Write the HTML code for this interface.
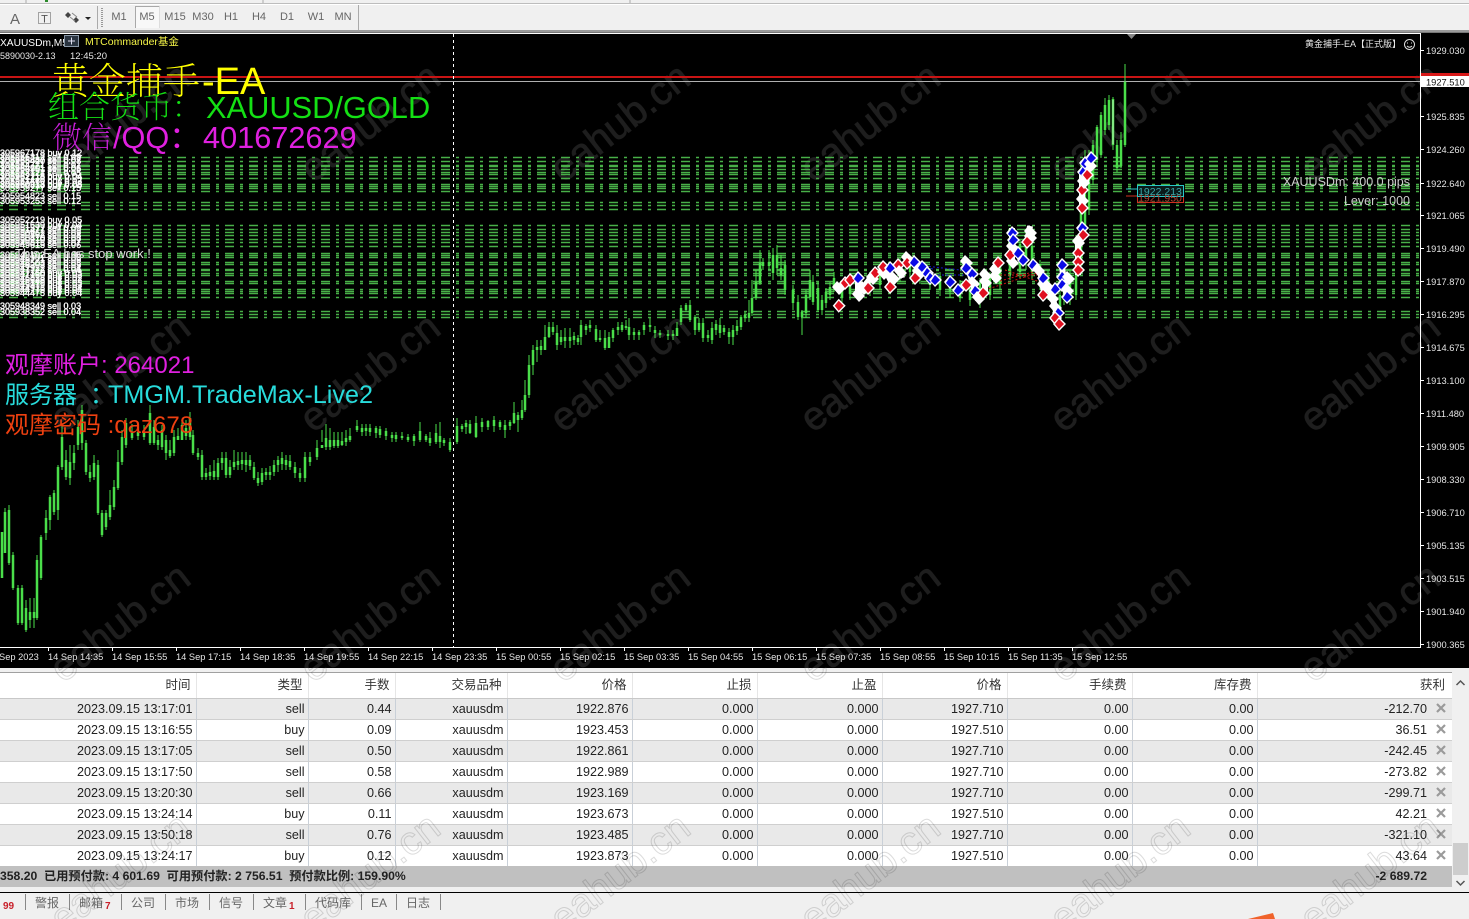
<!DOCTYPE html>
<html><head><meta charset="utf-8"><title>MT4</title>
<style>
*{box-sizing:border-box}
html,body{margin:0;padding:0;width:1469px;height:919px;overflow:hidden;background:#f0f0f0;font-family:"Liberation Sans","Noto Sans CJK SC",sans-serif}
.abs{position:absolute}
#top{left:0;top:0;width:1469px;height:33px;background:#f0f0f0}
#top .tf{position:absolute;top:11px;font-size:11px;color:#666;transform:translateX(-50%)}
#chart{left:0;top:33px;width:1469px;height:635px;background:#000;overflow:hidden}
#tbl{left:0;top:672px;width:1452px;border-top:1px solid #a0a0a0}
table{border-collapse:collapse;table-layout:fixed;width:1452px;font-size:12.6px;color:#222}
td,th{padding:0 3px 0 0;text-align:right;height:21px;line-height:20px;border-right:1px solid #c9d0d8;border-bottom:1px solid #cfcfcf;font-weight:normal;white-space:nowrap;overflow:hidden}
th{height:25px;color:#333;font-size:12.5px;padding-right:5px;border-right:1px solid #e6e6e6;border-bottom:1px solid #c8c8c8;background:#fff}
tr.o td{background:#e9e9e9}
tr.e td{background:#fff}
td.p{padding-right:25px;border-right:0;position:relative}
th.p{padding-right:7px;border-right:0}
#sum{left:0;top:866px;width:1452px;height:21px;background:#c0c0c0;font-size:12.2px;font-weight:bold;color:#222;line-height:21px;white-space:pre}
#sb{left:1452px;top:673px;width:17px;height:214px;background:#f0f0f0}
#bl{left:0;top:892px;width:1469px;height:1px;background:#000}
#tabs{left:0;top:893px;width:1469px;height:26px;background:#f0f0f0;font-size:12px;color:#666}
#tabs span{position:absolute;top:0;line-height:20px;white-space:nowrap}
#tabs i{position:absolute;top:1px;width:1px;height:16px;background:#888}
#tabs b{position:absolute;top:8px;font-size:10px;color:#c8202a;line-height:12px}
</style></head><body>

<div id="top" class="abs">
<svg width="1469" height="33" style="position:absolute;left:0;top:0">
<rect x="0" y="3" width="1469" height="1" fill="#bdbdbd"/>
<rect x="0" y="4" width="1469" height="1" fill="#fff"/>
<path d="M26 0V3M263 0V3M630 0V3" stroke="#aaa"/>
<path d="M45 1h3" stroke="#2a8a2a" stroke-width="2"/>
<rect x="0" y="30" width="1469" height="2" fill="#9a9a9a"/>
<rect x="0" y="32" width="1469" height="1" fill="#777"/>
<text x="15" y="24" font-size="15" fill="#666" text-anchor="middle" font-family="Liberation Sans">A</text>
<rect x="38.500" y="12.500" width="12" height="11" fill="none" stroke="#555" stroke-dasharray="1 1"/>
<text x="44.500" y="22.500" font-size="11" fill="#555" text-anchor="middle" font-family="Liberation Sans">T</text>
<path d="M68 12l3 3-3 3-3-3zM76 17l3 3-3 3-3-3z" fill="#444"/>
<path d="M70 17l5 4M72 13l5 4" stroke="#888"/>
<path d="M85 17h6l-3 3z" fill="#222"/>
<path d="M97.500 6V29" stroke="#aaa"/>
<path d="M102 8V28" stroke="#999" stroke-width="2" stroke-dasharray="1 1"/>
<path d="M135.500 28V6.500H159.500" fill="none" stroke="#a8a8a8"/>
<path d="M159.500 6.500V28" stroke="#ddd"/>
<rect x="136" y="7" width="23" height="21" fill="#f8f8f8"/>
<path d="M358.500 5V30" stroke="#aaa"/>
</svg>
<span class="tf" style="left:119px">M1</span><span class="tf" style="left:147px">M5</span><span class="tf" style="left:175px">M15</span><span class="tf" style="left:203px">M30</span><span class="tf" style="left:231px">H1</span><span class="tf" style="left:259px">H4</span><span class="tf" style="left:287px">D1</span><span class="tf" style="left:316px">W1</span><span class="tf" style="left:343px">MN</span>
</div>

<div id="chart" class="abs">
<svg width="1469" height="635" viewBox="0 33 1469 635" style="position:absolute;left:0;top:0" font-family="Liberation Sans,Noto Sans CJK SC,sans-serif">
<defs>
<g id="W"><path d="M-6-1L-1-7L7 1L1 7Z" fill="#fff"/></g>
<g id="B"><path d="M-6 0L0-7L7 0L0 7Z" fill="#fff"/><path d="M-4 1L0-5L5 0L0 5Z" fill="#0a0ae6"/></g>
<g id="R"><path d="M-6 0L0-7L7 0L0 7Z" fill="#fff"/><path d="M-4 0L0-5L5 0L0 5Z" fill="#e01020"/></g>
</defs>
<!-- watermarks -->
<g fill="#1e1e1e" stroke="#1e1e1e" stroke-width=".8" font-size="40" text-anchor="middle">
<text transform="translate(128 133) rotate(-38)">eahub.cn</text><text transform="translate(378 133) rotate(-38)">eahub.cn</text><text transform="translate(628 133) rotate(-38)">eahub.cn</text><text transform="translate(878 133) rotate(-38)">eahub.cn</text><text transform="translate(1128 133) rotate(-38)">eahub.cn</text><text transform="translate(1378 133) rotate(-38)">eahub.cn</text>
<text transform="translate(128 383) rotate(-38)">eahub.cn</text><text transform="translate(378 383) rotate(-38)">eahub.cn</text><text transform="translate(628 383) rotate(-38)">eahub.cn</text><text transform="translate(878 383) rotate(-38)">eahub.cn</text><text transform="translate(1128 383) rotate(-38)">eahub.cn</text><text transform="translate(1378 383) rotate(-38)">eahub.cn</text>
<text transform="translate(128 633) rotate(-38)">eahub.cn</text><text transform="translate(378 633) rotate(-38)">eahub.cn</text><text transform="translate(628 633) rotate(-38)">eahub.cn</text><text transform="translate(878 633) rotate(-38)">eahub.cn</text><text transform="translate(1128 633) rotate(-38)">eahub.cn</text><text transform="translate(1378 633) rotate(-38)">eahub.cn</text>
</g>
<!-- grid -->
<path d="M0 157.500H1420M0 161.500H1420M0 165.500H1420M0 166.500H1420M0 169.500H1420M0 172.500H1420M0 174.500H1420M0 178.500H1420M0 184.500H1420M0 186.500H1420M0 188.500H1420M0 191.500H1420M0 202.500H1420M0 205.500H1420M0 209.500H1420M0 225.500H1420M0 229.500H1420M0 232.500H1420M0 235.500H1420M0 239.500H1420M0 242.500H1420M0 246.500H1420M0 253.500H1420M0 255.500H1420M0 257.500H1420M0 262.500H1420M0 264.500H1420M0 269.500H1420M0 270.500H1420M0 273.500H1420M0 275.500H1420M0 281.500H1420M0 283.500H1420M0 289.500H1420M0 291.500H1420M0 293.500H1420M0 297.500H1420M0 311.500H1420M0 314.500H1420M0 317.500H1420" stroke="#48b048" stroke-width="1.400" fill="none" stroke-dasharray="9 6 3 6" stroke-dashoffset="15"/>
<!-- level lines -->
<rect x="0" y="76" width="1420" height="2" fill="#c81414"/>
<rect x="0" y="81" width="1420" height="1" fill="#b0b0b0"/>
<path d="M453.500 34V648" stroke="#fff" stroke-dasharray="3 3"/>
<!-- candles wicks -->
<path stroke="#4ade4a" stroke-width="1" fill="none" d="M5 508V520M9 505V565M13 552V590M18 585V625M22 585V625M26 600V632M30 598V628M34 598V628M37 555V620M41 535V580M46 510V540M50 495V530M54 490V515M58 465V520M62 425V470M66 450V480M70 445V485M74 445V470M78 420V450M82 405V450M86 440V475M90 465V482M94 455V480M98 460V515M102 510V537M106 510V530M110 490V520M114 480V510M118 450V490M122 430V465M126 418V448M132 424V440M138 425V440M144 425V440M150 405V445M154 420V445M158 435V450M162 425V450M166 435V460M170 440V458M174 430V456M178 428V440M182 420V440M186 420V440M190 412V440M193 430V455M198 448V460M202 450V480M206 468V480M210 465V480M214 460V480M218 458V480M222 452V470M226 452V478M230 460V478M234 450V470M238 452V470M242 452V470M246 452V472M250 455V470M254 462V480M258 472V486M262 468V485M266 468V480M270 466V480M274 460V476M278 456V472M282 452V470M286 455V470M290 455V470M295 462V478M300 468V482M305 452V482M310 452V466M317 440V460M322 430V442M326 424V450M330 428V450M334 432V448M338 432V448M342 432V446M346 430V446M350 428V442M357 420V432M362 424V436M366 424V436M370 424V436M376 426V438M380 426V438M386 428V440M392 432V442M396 432V442M402 432V440M408 434V442M414 434V446M420 422V442M426 434V442M430 432V446M436 424V444M440 422V448M444 438V446M450 438V452M457 418V444M462 424V432M466 420V434M470 420V434M476 416V438M482 418V432M488 420V430M494 416V432M500 420V430M505 420V438M510 420V430M514 402V424M518 412V432M522 400V420M525 380V412M529 355V398M533 345V375M537 340V362M541 340V355M545 325V350M549 322V338M553 322V335M557 325V350M561 330V345M565 328V348M570 328V348M574 332V345M578 335V345M581 320V345M586 324V335M590 320V332M596 325V342M600 330V342M605 330V350M609 332V348M613 328V342M618 322V335M622 322V332M626 320V330M629 318V340M634 328V340M639 330V340M644 322V335M650 318V332M655 326V338M660 330V338M668 330V340M673 330V340M677 322V335M681 305V325M686 303V312M690 300V322M695 315V335M699 318V332M703 318V342M708 330V342M712 322V344M716 320V335M720 318V338M724 325V335M729 328V344M733 325V345M737 320V335M741 315V330M745 312V322M749 300V322M752 280V316M756 270V300M760 250V285M763 258V270M769 250V270M773 248V280M777 245V275M781 255V280M785 260V295M793 285V310M798 295V320M802 310V335M806 290V318M810 270V300M813 275V305M818 282V312M822 295V315M826 288V308M830 282V300M834 272V292M842 282V305M850 278V300M860 275V300M870 272V296M880 268V290M890 262V286M900 258V282M910 256V278M920 262V284M930 268V290M940 272V296M950 276V298M960 280V302M970 282V306M980 278V308M990 272V300M1000 256V290M1010 240V280M1020 240V278M1026 230V270M1032 240V280M1040 260V290M1048 270V300M1054 285V320M1060 290V330M1064 265V305M1070 270V305M1076 235V300M1081 170V270M1085 150V240M1089 150V215M1093 140V185M1097 125V165M1101 112V158M1105 98V135M1109 95V130M1113 97V150M1117 140V172M1121 132V168M1125 64V147"/>
<!-- candles bodies -->
<path stroke="#4ade4a" stroke-width="2.500" fill="none" d="M2 532V578M5 512V553M9 510V563M13 555V588M18 588V623M22 588V623M26 608V630M30 612V620M34 612V618M37 560V618M41 537V578M46 518V533M50 497V520M54 493V512M58 467V510M62 437V467M66 460V477M70 462V478M74 453V463M78 427V445M82 410V443M86 443V472M90 472V478M94 463V477M98 465V513M102 513V535M106 513V527M110 505V517M114 487V507M118 462V488M122 437V462M126 423V445M132 433V438M138 432V436M144 433V437M150 413V443M154 427V443M158 440V445M162 430V447M166 440V453M170 450V456M174 437V453M178 436V440M182 425V440M186 428V436M190 418V437M193 435V453M198 453V457M202 455V477M206 473V477M210 472V476M214 471V477M218 463V477M222 458V463M226 458V475M230 467V475M234 462V467M238 461V465M242 460V464M246 460V465M250 460V466M254 467V478M258 478V483M262 473V482M266 472V475M270 472V475M274 465V472M278 460V465M282 458V464M286 460V465M290 461V467M295 467V473M300 473V478M305 457V478M310 457V462M317 448V457M322 445V448M326 438V447M330 440V447M334 440V446M338 440V446M342 441V445M346 438V442M350 436V440M357 426V430M362 428V432M366 428V431M370 428V432M376 428V433M380 429V435M386 431V436M392 435V438M396 435V439M402 436V438M408 437V440M414 436V441M420 431V440M426 436V440M430 438V443M436 433V442M440 436V442M444 440V443M450 442V450M457 426V442M462 426V429M466 423V427M470 424V433M476 423V437M482 422V427M488 421V427M494 420V426M500 422V427M505 425V430M510 422V426M514 413V423M518 415V420M522 410V418M525 395V410M529 365V395M533 350V365M537 347V350M541 346V350M545 337V350M549 327V337M553 327V332M557 333V345M561 337V342M565 337V341M570 337V341M574 336V340M578 338V342M581 325V337M586 326V330M590 325V328M596 329V340M600 338V340M605 338V348M609 337V348M613 330V338M618 327V330M622 325V330M626 326V328M629 327V335M634 332V335M639 332V335M644 325V330M650 325V327M655 330V333M660 333V335M668 334V336M673 334V336M677 328V336M681 308V322M686 305V310M690 305V320M695 317V330M699 323V330M703 323V338M708 335V338M712 328V340M716 324V330M720 325V333M724 328V332M729 332V337M733 330V337M737 326V331M741 317V327M745 315V318M749 313V318M752 298V313M756 282V298M760 263V283M763 262V266M769 262V266M773 255V273M777 255V268M781 268V275M785 265V290M793 290V303M798 302V317M802 312V317M806 295V313M810 280V297M813 282V302M818 288V310M822 300V310M826 292V303M830 287V295M834 278V288M842 285V298M850 282V294M860 280V292M870 277V290M880 272V285M890 267V280M900 262V276M910 260V272M920 266V278M930 272V285M940 276V290M950 280V292M960 284V298M970 288V300M980 282V302M990 276V295M1000 260V284M1010 245V275M1020 244V272M1026 236V262M1032 246V272M1040 264V284M1048 275V295M1054 290V314M1060 295V322M1064 270V300M1070 275V298M1076 240V295M1081 175V265M1085 158V232M1089 155V210M1093 145V180M1097 127V160M1101 115V155M1105 105V130M1109 100V125M1113 99V145M1117 145V168M1121 140V166M1125 82V145"/>
<path stroke="#b8f0b8" stroke-width="1" d="M1113 100V144"/>
<!-- trade lines -->
<g fill="none" stroke-dasharray="2 2">
<path d="M925 266L960 270L975 272M930 275H975M1030 265L1040 272M905 258L935 270" stroke="#1616c8"/>
<path d="M985 290L1040 272M1000 275H1040M1000 281L1040 270M1005 270L1040 282M860 288L905 262" stroke="#c81414"/>
</g>
<!-- white clumps -->
<path stroke="#fff" stroke-width="6" fill="none" d="M838 288L850 280M858 278V295M860 292L875 272M883 265L893 285M898 262L902 278M907 255L909 266M915 270L922 278M966 262L978 300M985 275V292M995 265V280M1012 228V262M1030 226L1027 245M1040 270L1045 298M1052 295L1057 315M1062 268L1067 298M1078 240V275M1082 170V212M1090 158L1086 182"/>
<!-- markers -->
<use href="#R" x="838.700" y="305.700"/>
<use href="#W" x="838" y="288"/><use href="#R" x="845" y="283"/><use href="#R" x="850" y="280"/><use href="#B" x="858" y="278"/><use href="#W" x="858" y="295"/><use href="#W" x="863" y="288"/><use href="#R" x="868" y="288"/><use href="#W" x="872" y="278"/><use href="#R" x="875" y="273"/><use href="#W" x="883" y="273"/><use href="#R" x="883" y="267"/><use href="#B" x="890" y="268"/><use href="#W" x="893" y="278"/><use href="#R" x="890" y="287"/><use href="#R" x="898" y="265"/><use href="#W" x="900" y="272"/><use href="#W" x="907" y="258"/><use href="#R" x="907" y="263"/><use href="#W" x="918" y="272"/><use href="#B" x="914" y="262"/><use href="#B" x="922" y="267"/><use href="#R" x="915" y="278"/><use href="#B" x="927" y="273"/><use href="#B" x="930" y="278"/><use href="#B" x="935" y="280"/><use href="#B" x="950" y="282"/><use href="#B" x="958" y="290"/><use href="#W" x="966" y="262"/><use href="#B" x="966" y="268"/><use href="#B" x="972" y="274"/><use href="#W" x="973" y="283"/><use href="#R" x="966" y="285"/><use href="#B" x="975" y="291"/><use href="#W" x="978" y="298"/><use href="#W" x="985" y="275"/><use href="#W" x="985" y="282"/><use href="#R" x="983" y="293"/><use href="#W" x="995" y="270"/><use href="#W" x="995" y="277"/><use href="#R" x="998" y="263"/><use href="#W" x="1012" y="247"/><use href="#W" x="1012" y="262"/><use href="#B" x="1012" y="233"/><use href="#B" x="1013" y="240"/><use href="#R" x="1010" y="255"/><use href="#B" x="1018" y="253"/><use href="#B" x="1023" y="260"/><use href="#W" x="1030" y="232"/><use href="#W" x="1030" y="237"/><use href="#R" x="1027" y="242"/><use href="#B" x="1033" y="265"/><use href="#W" x="1038" y="270"/><use href="#W" x="1043" y="285"/><use href="#B" x="1043" y="278"/><use href="#R" x="1043" y="295"/><use href="#W" x="1048" y="287"/><use href="#B" x="1055" y="289"/><use href="#W" x="1052" y="298"/><use href="#W" x="1055" y="307"/><use href="#B" x="1058" y="313"/><use href="#R" x="1055" y="318"/><use href="#R" x="1059" y="324"/><use href="#B" x="1062" y="265"/><use href="#B" x="1062" y="277"/><use href="#W" x="1068" y="278"/><use href="#B" x="1062" y="285"/><use href="#W" x="1067" y="290"/><use href="#B" x="1067" y="297"/><use href="#W" x="1078" y="242"/><use href="#B" x="1082" y="228"/><use href="#R" x="1083" y="235"/><use href="#R" x="1078" y="253"/><use href="#R" x="1078" y="262"/><use href="#R" x="1078" y="270"/><use href="#W" x="1082" y="200"/><use href="#R" x="1082" y="208"/><use href="#R" x="1082" y="190"/><use href="#W" x="1083" y="182"/><use href="#B" x="1083" y="172"/><use href="#R" x="1087" y="175"/><use href="#B" x="1085" y="163"/><use href="#W" x="1090" y="165"/><use href="#B" x="1091" y="158"/>
<!-- order price labels -->
<path d="M1126 189H1137" stroke="#28c8c8"/><path d="M1126 196H1137" stroke="#d03020"/>
<rect x="1137.500" y="186.500" width="46" height="16" fill="none" stroke="#d03020"/>
<rect x="1137.500" y="185.500" width="46" height="11" fill="#0a1a1a" stroke="#28c8c8"/>
<text x="1160" y="201.500" font-size="10.500" fill="#b04030" text-anchor="middle">1921.950</text>
<text x="1160" y="195" font-size="10.500" fill="#38a8a8" text-anchor="middle">1922.213</text>
<!-- left labels stacked -->
<g fill="#fff" stroke="#fff" stroke-width=".35" font-size="9">
<text x="0" y="156">305967178 buy 0.12</text><text x="0" y="160">305966312 sell 0.09</text><text x="0" y="163">305965887 sell 0.07</text><text x="0" y="164">305965420 sell 0.08</text><text x="0" y="168">305964771 sell 0.07</text><text x="0" y="171">305964201 sell 0.06</text><text x="0" y="172">305963951 sell 0.06</text><text x="0" y="176">305963127 sell 0.05</text><text x="0" y="179">305962718 buy 0.04</text><text x="0" y="180">305962218 buy 0.04</text><text x="0" y="184">305961460 buy 0.03</text><text x="0" y="187">305960913 buy 0.05</text><text x="0" y="188">305960513 buy 0.05</text><text x="0" y="191">305959277 sell 0.15</text>
<text x="0" y="199">305954823 sell 0.15</text><text x="0" y="204">305953253 sell 0.12</text>
<text x="0" y="223">305952219 buy 0.05</text><text x="0" y="228">305951639 buy 0.04</text><text x="0" y="231">305951577 sell 0.09</text><text x="0" y="233">305951477 sell 0.09</text><text x="0" y="236">305950962 sell 0.09</text><text x="0" y="238">305950862 sell 0.08</text><text x="0" y="241">305950410 sell 0.08</text><text x="0" y="243">305950210 sell 0.07</text><text x="0" y="246">305949815 sell 0.07</text><text x="0" y="248">305949615 sell 0.06</text><text x="0" y="258">305949102 sell 0.05</text><text x="0" y="261">305948901 sell 0.06</text><text x="0" y="263">305948771 sell 0.06</text><text x="0" y="266">305948503 sell 0.05</text><text x="0" y="268">305948303 sell 0.05</text><text x="0" y="271">305947922 sell 0.04</text><text x="0" y="273">305947722 sell 0.04</text><text x="0" y="276">305947360 buy 0.03</text><text x="0" y="278">305947160 buy 0.03</text><text x="0" y="281">305946828 buy 0.02</text><text x="0" y="283">305946628 buy 0.02</text><text x="0" y="286">305946179 buy 0.03</text><text x="0" y="288">305945979 buy 0.03</text><text x="0" y="291">305944975 buy 0.04</text><text x="0" y="293">305944775 buy 0.04</text><text x="0" y="296">305944475 buy 0.04</text>
<text x="0" y="309">305948349 sell 0.03</text><text x="0" y="315">305938352 sell 0.04</text>
</g>
<text x="15" y="258" font-size="13" fill="#ddd">This EA has stop work !</text>
<!-- top-left -->
<text x="0" y="46" font-size="10.200" fill="#fff">XAUUSDm,M5</text>
<rect x="64.500" y="35.500" width="14" height="11" fill="#2a3440" stroke="#8a98a8"/>
<path d="M71.500 37.500v7M68 41h7" stroke="#dde"/>
<text x="85" y="45" font-size="10.500" fill="#f4f448">MTCommander基金</text>
<text x="0" y="59" font-size="9" fill="#e8e8e8">5890030-2.13</text>
<text x="70" y="59" font-size="9.500" fill="#e8e8e8">12:45:20</text>
<text x="52" y="94" font-size="37" fill="#ffff00" font-family="Noto Serif CJK SC,serif" font-weight="200">黄金捕手</text>
<text x="202" y="94" font-size="38" fill="#ffff00">-EA</text>
<text x="48" y="118" font-size="31" fill="#14e014" font-family="Noto Serif CJK SC,serif" font-weight="200">组合货币：</text>
<text x="206" y="118" font-size="30.800" fill="#14e014">XAUUSD/GOLD</text>
<text x="52" y="148" font-size="30" fill="#c820d8" font-family="Noto Serif CJK SC,serif" font-weight="200">微信</text>
<text x="113" y="148" font-size="30.700" fill="#e020e0">/QQ：</text>
<text x="203" y="148" font-size="30.700" fill="#e020e0">401672629</text>
<text x="5" y="373" font-size="24" fill="#e020e0">观摩账户: 264021</text>
<text x="5" y="403" font-size="24" fill="#28dcdc">服务器</text>
<text x="90" y="403" font-size="24" fill="#28dcdc">：</text>
<text x="108" y="403" font-size="25.200" fill="#28dcdc">TMGM.TradeMax-Live2</text>
<text x="5" y="433" font-size="24" fill="#ee4010">观摩密码 :qaz678</text>
<!-- top right -->
<text x="1305" y="47" font-size="9" fill="#e8e8e8">黄金捕手-EA【正式版】</text>
<circle cx="1409.500" cy="44.500" r="5" fill="none" stroke="#ddd"/><path d="M1407 46q2.500 2.500 5 0" stroke="#ddd" fill="none"/><path d="M1407.500 42.500v1M1411.500 42.500v1" stroke="#ddd"/>
<path d="M1127 34h9l-4.500 5z" fill="#888"/>
<text x="1410" y="186" font-size="12.500" fill="#ccc" text-anchor="end">XAUUSDm: 400.0 pips</text>
<text x="1410" y="205" font-size="12.500" fill="#ccc" text-anchor="end">Lever: 1000</text>
<!-- frame -->
<rect x="0" y="33" width="1421" height="1" fill="#fff"/>
<rect x="1420" y="33" width="1" height="615" fill="#fff"/>
<rect x="0" y="647" width="1421" height="1" fill="#fff"/>
<path d="M48.500 648v3M112.500 648v3M176.500 648v3M240.500 648v3M304.500 648v3M368.500 648v3M432.500 648v3M496.500 648v3M560.500 648v3M624.500 648v3M688.500 648v3M752.500 648v3M816.500 648v3M880.500 648v3M944.500 648v3M1008.500 648v3M1072.500 648v3" stroke="#fff"/>
<path d="M1421 50.500h3M1421 116.500h3M1421 149.500h3M1421 183.500h3M1421 215.500h3M1421 248.500h3M1421 281.500h3M1421 314.500h3M1421 347.500h3M1421 380.500h3M1421 413.500h3M1421 446.500h3M1421 479.500h3M1421 512.500h3M1421 545.500h3M1421 578.500h3M1421 611.500h3M1421 644.500h3" stroke="#fff"/>
<!-- price axis -->
<g fill="#e6e6e6" font-size="9.300">
<text x="1426" y="54">1929.030</text><text x="1426" y="120">1925.835</text><text x="1426" y="153">1924.260</text><text x="1426" y="187">1922.640</text><text x="1426" y="219">1921.065</text><text x="1426" y="252">1919.490</text><text x="1426" y="285">1917.870</text><text x="1426" y="318">1916.295</text><text x="1426" y="351">1914.675</text><text x="1426" y="384">1913.100</text><text x="1426" y="417">1911.480</text><text x="1426" y="450">1909.905</text><text x="1426" y="483">1908.330</text><text x="1426" y="516">1906.710</text><text x="1426" y="549">1905.135</text><text x="1426" y="582">1903.515</text><text x="1426" y="615">1901.940</text><text x="1426" y="648">1900.365</text>
</g>
<rect x="1421" y="73" width="48" height="7" fill="#d81818"/>
<rect x="1421" y="76" width="48" height="11" fill="#fff"/>
<text x="1426" y="85.500" font-size="9.300" fill="#111">1927.510</text>
<!-- time axis -->
<g fill="#e6e6e6" font-size="9.300">
<text x="-1" y="660">Sep 2023</text><text x="48" y="660">14 Sep 14:35</text><text x="112" y="660">14 Sep 15:55</text><text x="176" y="660">14 Sep 17:15</text><text x="240" y="660">14 Sep 18:35</text><text x="304" y="660">14 Sep 19:55</text><text x="368" y="660">14 Sep 22:15</text><text x="432" y="660">14 Sep 23:35</text><text x="496" y="660">15 Sep 00:55</text><text x="560" y="660">15 Sep 02:15</text><text x="624" y="660">15 Sep 03:35</text><text x="688" y="660">15 Sep 04:55</text><text x="752" y="660">15 Sep 06:15</text><text x="816" y="660">15 Sep 07:35</text><text x="880" y="660">15 Sep 08:55</text><text x="944" y="660">15 Sep 10:15</text><text x="1008" y="660">15 Sep 11:35</text><text x="1072" y="660">15 Sep 12:55</text>
</g>
</svg>
</div>

<div id="tbl" class="abs">
<table>
<colgroup><col style="width:196px"><col style="width:112px"><col style="width:87px"><col style="width:112px"><col style="width:125px"><col style="width:125px"><col style="width:125px"><col style="width:125px"><col style="width:125px"><col style="width:125px"><col style="width:195px"></colgroup>
<tr><th>时间</th><th>类型</th><th>手数</th><th>交易品种</th><th>价格</th><th>止损</th><th>止盈</th><th>价格</th><th>手续费</th><th>库存费</th><th class="p">获利</th></tr>
<tr class="o"><td>2023.09.15 13:17:01</td><td>sell</td><td>0.44</td><td>xauusdm</td><td>1922.876</td><td>0.000</td><td>0.000</td><td>1927.710</td><td>0.00</td><td>0.00</td><td class="p">-212.70</td></tr>
<tr class="e"><td>2023.09.15 13:16:55</td><td>buy</td><td>0.09</td><td>xauusdm</td><td>1923.453</td><td>0.000</td><td>0.000</td><td>1927.510</td><td>0.00</td><td>0.00</td><td class="p">36.51</td></tr>
<tr class="o"><td>2023.09.15 13:17:05</td><td>sell</td><td>0.50</td><td>xauusdm</td><td>1922.861</td><td>0.000</td><td>0.000</td><td>1927.710</td><td>0.00</td><td>0.00</td><td class="p">-242.45</td></tr>
<tr class="e"><td>2023.09.15 13:17:50</td><td>sell</td><td>0.58</td><td>xauusdm</td><td>1922.989</td><td>0.000</td><td>0.000</td><td>1927.710</td><td>0.00</td><td>0.00</td><td class="p">-273.82</td></tr>
<tr class="o"><td>2023.09.15 13:20:30</td><td>sell</td><td>0.66</td><td>xauusdm</td><td>1923.169</td><td>0.000</td><td>0.000</td><td>1927.710</td><td>0.00</td><td>0.00</td><td class="p">-299.71</td></tr>
<tr class="e"><td>2023.09.15 13:24:14</td><td>buy</td><td>0.11</td><td>xauusdm</td><td>1923.673</td><td>0.000</td><td>0.000</td><td>1927.510</td><td>0.00</td><td>0.00</td><td class="p">42.21</td></tr>
<tr class="o"><td>2023.09.15 13:50:18</td><td>sell</td><td>0.76</td><td>xauusdm</td><td>1923.485</td><td>0.000</td><td>0.000</td><td>1927.710</td><td>0.00</td><td>0.00</td><td class="p">-321.10</td></tr>
<tr class="e"><td>2023.09.15 13:24:17</td><td>buy</td><td>0.12</td><td>xauusdm</td><td>1923.873</td><td>0.000</td><td>0.000</td><td>1927.510</td><td>0.00</td><td>0.00</td><td class="p">43.64</td></tr>
</table>
</div>
<svg class="abs" style="left:0;top:0" width="1469" height="919">
<g stroke="#9a9a9a" stroke-width="2.200">
<path d="M1437 704l8 8M1445 704l-8 8M1437 725l8 8M1445 725l-8 8M1437 746l8 8M1445 746l-8 8M1437 767l8 8M1445 767l-8 8M1437 788l8 8M1445 788l-8 8M1437 809l8 8M1445 809l-8 8M1437 830l8 8M1445 830l-8 8M1437 851l8 8M1445 851l-8 8"/>
</g>
</svg>
<div id="sum" class="abs">358.20  已用预付款: 4 601.69  可用预付款: 2 756.51  预付款比例: 159.90%<span style="position:absolute;right:25px;top:0">-2 689.72</span></div>
<div id="sb" class="abs">
<svg width="17" height="214"><path d="M4.500 12l4-4 4 4" fill="none" stroke="#555" stroke-width="1.500"/><rect x="1" y="170" width="15" height="32" fill="#cdcdcd"/><path d="M4.500 208l4 4 4-4" fill="none" stroke="#555" stroke-width="1.500"/></svg>
</div>
<div id="bl" class="abs"></div>
<div id="tabs" class="abs">
<b style="left:3px">99</b><i style="left:25px"></i>
<span style="left:35px">警报</span><i style="left:69px"></i>
<span style="left:79px">邮箱</span><b style="left:105px">7</b><i style="left:121px"></i>
<span style="left:131px">公司</span><i style="left:165px"></i>
<span style="left:175px">市场</span><i style="left:209px"></i>
<span style="left:219px">信号</span><i style="left:253px"></i>
<span style="left:263px">文章</span><b style="left:289px">1</b><i style="left:305px"></i>
<span style="left:315px">代码库</span><i style="left:361px"></i>
<span style="left:371px">EA</span><i style="left:396px"></i>
<span style="left:406px">日志</span><i style="left:440px"></i>
</div>
<svg class="abs" style="left:0;top:0;pointer-events:none" width="1469" height="919">
<path d="M1248 919l25-6 2 6z" fill="#f0622a"/>
<defs><clipPath id="c"><rect x="0" y="668" width="1469" height="251"/></clipPath></defs>
<g clip-path="url(#c)" fill="none" stroke="#dcdcdc" stroke-width="1" font-size="40" text-anchor="middle" font-family="Liberation Sans,sans-serif" style="mix-blend-mode:multiply">
<text transform="translate(128 633) rotate(-38)">eahub.cn</text><text transform="translate(378 633) rotate(-38)">eahub.cn</text><text transform="translate(628 633) rotate(-38)">eahub.cn</text><text transform="translate(878 633) rotate(-38)">eahub.cn</text><text transform="translate(1128 633) rotate(-38)">eahub.cn</text><text transform="translate(1378 633) rotate(-38)">eahub.cn</text>
<text transform="translate(128 883) rotate(-38)">eahub.cn</text><text transform="translate(378 883) rotate(-38)">eahub.cn</text><text transform="translate(628 883) rotate(-38)">eahub.cn</text><text transform="translate(878 883) rotate(-38)">eahub.cn</text><text transform="translate(1128 883) rotate(-38)">eahub.cn</text><text transform="translate(1378 883) rotate(-38)">eahub.cn</text>
</g>
</svg>
</body></html>
